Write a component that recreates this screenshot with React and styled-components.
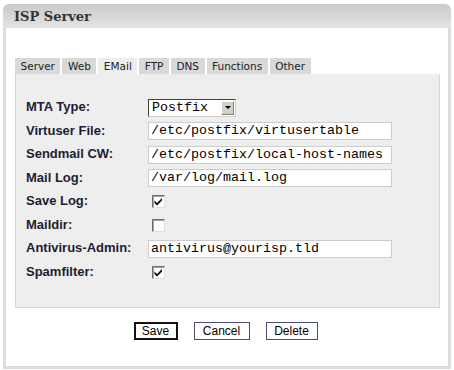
import styled, { createGlobalStyle } from 'styled-components'

const GlobalStyle = createGlobalStyle`
  body {
    margin: 0;
    background: #ffffff;
    font-family: "Liberation Sans", Arial, sans-serif;
  }
`

const Frame = styled.div`
  width: 448px;
  margin: 4px 0 0 3px;
`

const Header = styled.div`
  height: 24px;
  border-radius: 6px 6px 0 0;
  background: linear-gradient(#c9c9c9, #e4e4e4);
  padding-left: 11px;
  display: flex;
  align-items: center;
  font-family: "DejaVu Serif", Georgia, serif;
  font-weight: bold;
  font-size: 13px;
  color: #333333;
`

const Body = styled.div`
  border: 3px solid #dcdcdc;
  border-top: none;
  padding: 30px 8px 26px 9px;
  display: flex;
  flex-direction: column;
`

const Tabs = styled.div`
  display: flex;
  gap: 2px;
`

const Tab = styled.div`
  height: 16px;
  padding: 0 5.5px;
  display: flex;
  align-items: center;
  font-family: "DejaVu Sans", Verdana, sans-serif;
  font-size: 10.5px;
  color: #222;
  background: ${p => (p.$active ? '#eeeeee' : '#d9d9d9')};
`

const Panel = styled.div`
  flex-shrink: 0;
  background: #eeeeee;
  border: 1px solid #d6d6d6;
  border-top: none;
  height: 234px;
  box-sizing: border-box;
  padding: 22px 0 0 10px;
`

const Form = styled.div`
  display: grid;
  grid-template-columns: 122px 244px;
  grid-auto-rows: 23.5px;
  align-items: center;
`

const Label = styled.div`
  font-weight: bold;
  font-size: 13px;
  color: #1d1d33;
  padding-bottom: 2px;
`

const TextField = styled.div`
  height: 18px;
  box-sizing: border-box;
  border: 1px solid #cccccc;
  background: #ffffff;
  font-family: "Liberation Mono", "Courier New", monospace;
  font-size: 13.33px;
  line-height: 16px;
  padding-left: 2px;
  color: #000;
  white-space: nowrap;
  overflow: hidden;
`

const Select = styled.div`
  width: 88px;
  height: 18px;
  box-sizing: border-box;
  border: 1px solid;
  border-color: #404040 #d4d0c8 #d4d0c8 #404040;
  background: #fff;
  display: flex;
  align-items: center;
  justify-content: space-between;
  font-family: "Liberation Mono", "Courier New", monospace;
  font-size: 13.33px;
  padding: 0 1px 0 3px;
`

const Arrow = styled.div`
  width: 13px;
  height: 14px;
  box-sizing: border-box;
  background: #d4d0c8;
  border: 1px solid;
  border-color: #fff #808080 #808080 #fff;
  display: flex;
  align-items: center;
  justify-content: center;
`

const Check = styled.div`
  width: 13px;
  height: 13px;
  box-sizing: border-box;
  margin-left: 4px;
  background: #fff;
  border: 1px solid;
  border-color: #707070 #e0e0e0 #e0e0e0 #707070;
  box-shadow: inset 1px 1px 0 #a0a0a0;
  display: flex;
  align-items: center;
  justify-content: center;
`

const Buttons = styled.div`
  display: flex;
  justify-content: center;
  gap: 16px;
  margin-top: 14px;
  padding-right: 4px;
`

const Button = styled.div`
  width: ${p => p.$w}px;
  height: 18px;
  box-sizing: border-box;
  border: ${p => (p.$main ? '2px solid #111' : '1px solid #4d4b80')};
  display: flex;
  align-items: center;
  justify-content: center;
  font-size: 12px;
  color: #000;
  background: #fff;
`

function CheckBox({ checked }) {
  return (
    <Check>
      {checked && (
        <svg width="9" height="9" viewBox="0 0 9 9">
          <path d="M0.5 3.5 L3 6 L8 1 L8 3.5 L3 8.5 L0.5 6 Z" fill="#000" />
        </svg>
      )}
    </Check>
  )
}

const tabs = ['Server', 'Web', 'EMail', 'FTP', 'DNS', 'Functions', 'Other']

export default function App() {
  return (
    <>
      <GlobalStyle />
      <Frame>
        <Header>ISP Server</Header>
        <Body>
          <Tabs>
            {tabs.map(t => (
              <Tab key={t} $active={t === 'EMail'}>{t}</Tab>
            ))}
          </Tabs>
          <Panel>
            <Form>
              <Label>MTA Type:</Label>
              <Select>
                <span>Postfix</span>
                <Arrow>
                  <svg width="6" height="4" viewBox="0 0 6 4">
                    <path d="M0 0 H6 L3 3 Z" fill="#000" />
                  </svg>
                </Arrow>
              </Select>
              <Label>Virtuser File:</Label>
              <TextField>/etc/postfix/virtusertable</TextField>
              <Label>Sendmail CW:</Label>
              <TextField>/etc/postfix/local-host-names</TextField>
              <Label>Mail Log:</Label>
              <TextField>/var/log/mail.log</TextField>
              <Label>Save Log:</Label>
              <CheckBox checked />
              <Label>Maildir:</Label>
              <CheckBox />
              <Label>Antivirus-Admin:</Label>
              <TextField>antivirus@yourisp.tld</TextField>
              <Label>Spamfilter:</Label>
              <CheckBox checked />
            </Form>
          </Panel>
          <Buttons>
            <Button $main $w={44}>Save</Button>
            <Button $w={56}>Cancel</Button>
            <Button $w={52}>Delete</Button>
          </Buttons>
        </Body>
      </Frame>
    </>
  )
}
